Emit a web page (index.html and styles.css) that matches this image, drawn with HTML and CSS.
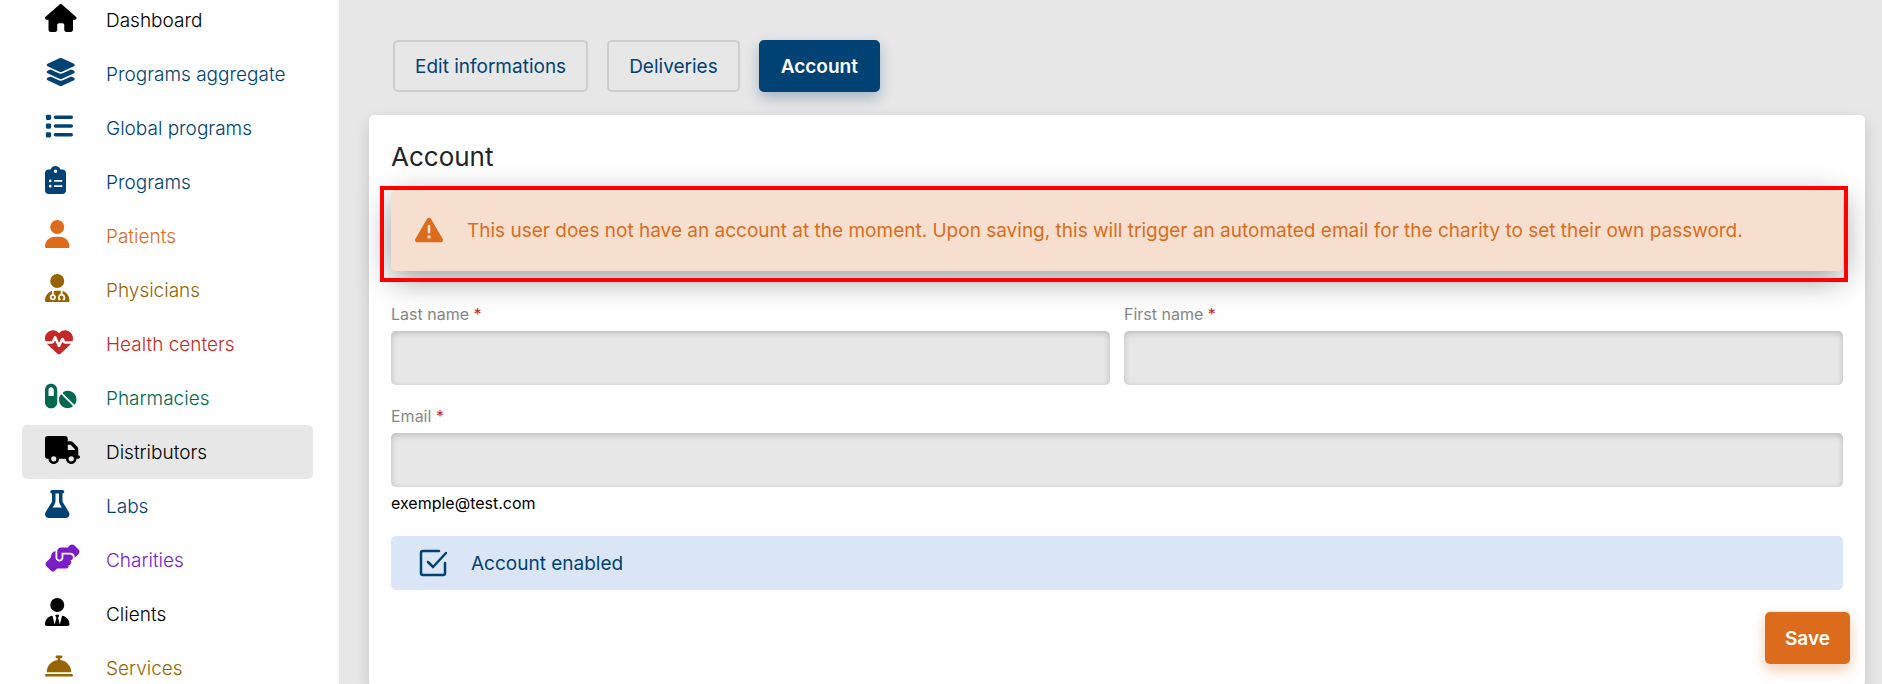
FILE: index.html
```html
<!DOCTYPE html>
<html lang="en">
<head>
  <meta charset="UTF-8">
  <meta name="viewport" content="width=device-width, initial-scale=1.0">
  <title>Distributors - Account</title>
  <link rel="stylesheet" href="styles.css">
</head>
<body>

  <!-- Sidebar -->
  <nav class="sidebar">
    <ul class="menu">
      <li><a href="#" class="menu-link black">
        <span class="menu-icon"><svg viewBox="0 0 576 512"><path d="M575.8 255.5c0 18-15 32.1-32 32.1h-32l.7 160.2c0 2.7-.2 5.4-.5 8.1V472c0 22.1-17.9 40-40 40H456c-1.1 0-2.2 0-3.3-.1c-1.4 .1-2.8 .1-4.2 .1H416 392c-22.1 0-40-17.9-40-40V448 384c0-17.7-14.3-32-32-32H256c-17.7 0-32 14.3-32 32v64 24c0 22.1-17.9 40-40 40H160 128.1c-1.5 0-3-.1-4.5-.2c-1.2 .1-2.4 .2-3.6 .2H104c-22.1 0-40-17.9-40-40V360c0-.9 0-1.9 .1-2.8V287.6H32c-18 0-32-14-32-32.1c0-9 3-17 10-24L266.4 8c7-7 15-8 22-8s15 2 21 7L564.8 231.5c8 7 12 15 11 24z"/></svg></span>
        Dashboard
      </a></li>
      <li><a href="#" class="menu-link blue">
        <span class="menu-icon"><svg viewBox="0 0 576 512"><path d="M264.5 5.2c14.9-6.9 32.1-6.9 47 0l218.6 101c8.5 3.9 13.9 12.4 13.9 21.8s-5.4 17.9-13.9 21.8l-218.6 101c-14.9 6.9-32.1 6.9-47 0L45.9 149.8C37.4 145.8 32 137.3 32 128s5.4-17.9 13.9-21.8L264.5 5.2zM476.9 209.6l53.2 24.6c8.5 3.9 13.9 12.4 13.9 21.8s-5.4 17.9-13.9 21.8l-218.6 101c-14.9 6.9-32.1 6.9-47 0L45.9 277.8C37.4 273.8 32 265.3 32 256s5.4-17.9 13.9-21.8l53.2-24.6 152 70.2c23.4 10.8 50.4 10.8 73.8 0l152-70.2zm-152 198.2l152-70.2 53.2 24.6c8.5 3.9 13.9 12.4 13.9 21.8s-5.4 17.9-13.9 21.8l-218.6 101c-14.9 6.9-32.1 6.9-47 0L45.9 405.8C37.4 401.8 32 393.3 32 384s5.4-17.9 13.9-21.8l53.2-24.6 152 70.2c23.4 10.8 50.4 10.8 73.8 0z"/></svg></span>
        Programs aggregate
      </a></li>
      <li><a href="#" class="menu-link blue">
        <span class="menu-icon"><svg viewBox="0 0 512 512"><path d="M40 48C26.7 48 16 58.7 16 72v48c0 13.3 10.7 24 24 24H88c13.3 0 24-10.7 24-24V72c0-13.3-10.7-24-24-24H40zM192 64c-17.7 0-32 14.3-32 32s14.3 32 32 32H480c17.7 0 32-14.3 32-32s-14.3-32-32-32H192zm0 160c-17.7 0-32 14.3-32 32s14.3 32 32 32H480c17.7 0 32-14.3 32-32s-14.3-32-32-32H192zm0 160c-17.7 0-32 14.3-32 32s14.3 32 32 32H480c17.7 0 32-14.3 32-32s-14.3-32-32-32H192zM16 232v48c0 13.3 10.7 24 24 24H88c13.3 0 24-10.7 24-24V232c0-13.3-10.7-24-24-24H40c-13.3 0-24 10.7-24 24zM40 368c-13.3 0-24 10.7-24 24v48c0 13.3 10.7 24 24 24H88c13.3 0 24-10.7 24-24V392c0-13.3-10.7-24-24-24H40z"/></svg></span>
        Global programs
      </a></li>
      <li><a href="#" class="menu-link blue">
        <span class="menu-icon"><svg viewBox="0 0 384 512"><path d="M192 0c-41.8 0-77.4 26.7-90.5 64H64C28.7 64 0 92.7 0 128V448c0 35.3 28.7 64 64 64H320c35.3 0 64-28.7 64-64V128c0-35.3-28.7-64-64-64H282.5C269.4 26.7 233.8 0 192 0zm0 64a32 32 0 1 1 0 64 32 32 0 1 1 0-64zM72 272a24 24 0 1 1 48 0 24 24 0 1 1 -48 0zm104-16H304c8.8 0 16 7.2 16 16s-7.2 16-16 16H176c-8.8 0-16-7.2-16-16s7.2-16 16-16zM72 368a24 24 0 1 1 48 0 24 24 0 1 1 -48 0zm88 0c0-8.8 7.2-16 16-16H304c8.8 0 16 7.2 16 16s-7.2 16-16 16H176c-8.8 0-16-7.2-16-16z"/></svg></span>
        Programs
      </a></li>
      <li><a href="#" class="menu-link orange">
        <span class="menu-icon"><svg viewBox="0 0 448 512"><path d="M224 256A128 128 0 1 0 224 0a128 128 0 1 0 0 256zm-45.7 48C79.8 304 0 383.8 0 482.3C0 498.7 13.3 512 29.7 512H418.3c16.4 0 29.7-13.3 29.7-29.7C448 383.8 368.2 304 269.7 304H178.3z"/></svg></span>
        Patients
      </a></li>
      <li><a href="#" class="menu-link brown">
        <span class="menu-icon"><svg viewBox="0 0 448 512"><path d="M224 256A128 128 0 1 0 224 0a128 128 0 1 0 0 256zm-96 55.2C54 332.9 0 401.3 0 482.3C0 498.7 13.3 512 29.7 512H418.3c16.4 0 29.7-13.3 29.7-29.7c0-81-54-149.4-128-171.1V362c27.6 7.1 48 32.2 48 62v40c0 8.8-7.2 16-16 16H336c-8.8 0-16-7.2-16-16s7.2-16 16-16V424c0-17.7-14.3-32-32-32s-32 14.3-32 32v24c8.8 0 16 7.2 16 16s-7.2 16-16 16H256c-8.8 0-16-7.2-16-16V424c0-29.8 20.4-54.9 48-62V304.9c-6-.6-12.1-.9-18.3-.9H178.3c-6.2 0-12.3 .3-18.3 .9v65.4c23.1 6.9 40 28.3 40 53.7c0 30.9-25.1 56-56 56s-56-25.1-56-56c0-25.4 16.9-46.8 40-53.7V311.2zM144 448a24 24 0 1 0 0-48 24 24 0 1 0 0 48z"/></svg></span>
        Physicians
      </a></li>
      <li><a href="#" class="menu-link red">
        <span class="menu-icon"><svg viewBox="0 0 512 512"><path d="M228.3 469.1L47.6 300.4c-4.2-3.9-8.2-8.1-11.9-12.4h87c22.6 0 43-13.6 51.7-34.5l10.5-25.2 49.3 109.5c3.8 8.5 12.1 14 21.4 14.1s17.8-5 22-13.3L320 253.7l1.7 3.4c9.5 19 28.9 31 50.1 31H476.3c-3.7 4.3-7.7 8.5-11.9 12.4L283.7 469.1c-7.5 7-17.4 10.9-27.7 10.9s-20.2-3.9-27.7-10.9zM503.7 240h-132c-3 0-5.8-1.7-7.2-4.4l-23.2-46.3c-4.1-8.1-12.4-13.3-21.5-13.3s-17.4 5.1-21.5 13.3l-41.4 82.8L205.9 158.2c-3.9-8.7-12.7-14.3-22.2-14.1s-18.1 5.9-21.8 14.8l-31.8 76.3c-1.2 3-4.2 4.9-7.4 4.9H16c-2.6 0-5 .4-7.3 1.1C3 225.2 0 208.2 0 190.9v-5.8c0-69.9 50.5-129.5 119.4-141C165 36.5 211.4 51.4 244 84l12 12 12-12c32.6-32.6 79-47.5 124.6-39.9C461.5 55.6 512 115.2 512 185.1v5.8c0 16.9-2.8 33.5-8.3 49.1z"/></svg></span>
        Health centers
      </a></li>
      <li><a href="#" class="menu-link green">
        <span class="menu-icon"><svg viewBox="0 0 576 512"><path d="M112 96c-26.5 0-48 21.5-48 48V256h96V144c0-26.5-21.5-48-48-48zM0 144C0 82.1 50.1 32 112 32s112 50.1 112 112V368c0 61.9-50.1 112-112 112S0 429.9 0 368V144zM554.9 399.4c-7.1 12.3-23.7 13.1-33.8 3.1L333.5 214.9c-10-10-9.3-26.7 3.1-33.8C360 167.7 387.1 160 416 160c88.4 0 160 71.6 160 160c0 28.9-7.7 56-21.1 79.4zm-59.5 59.5C472 472.3 444.9 480 416 480c-88.4 0-160-71.6-160-160c0-28.9 7.7-56 21.1-79.4c7.1-12.3 23.7-13.1 33.8-3.1L498.5 425.1c10 10 9.3 26.7-3.1 33.8z"/></svg></span>
        Pharmacies
      </a></li>
      <li><a href="#" class="menu-link black active">
        <span class="menu-icon"><svg viewBox="0 0 640 512"><path d="M48 0C21.5 0 0 21.5 0 48V368c0 26.5 21.5 48 48 48H64c0 53 43 96 96 96s96-43 96-96H384c0 53 43 96 96 96s96-43 96-96h32c17.7 0 32-14.3 32-32s-14.3-32-32-32V288 256 237.3c0-17-6.7-33.3-18.7-45.3L512 114.7c-12-12-28.3-18.7-45.3-18.7H416V48c0-26.5-21.5-48-48-48H48zM416 160h50.7L544 237.3V256H416V160zM112 416a48 48 0 1 1 96 0 48 48 0 1 1 -96 0zm368-48a48 48 0 1 1 0 96 48 48 0 1 1 0-96z"/></svg></span>
        Distributors
      </a></li>
      <li><a href="#" class="menu-link blue">
        <span class="menu-icon"><svg viewBox="0 0 448 512"><path d="M288 0H160 128C110.3 0 96 14.3 96 32s14.3 32 32 32V196.8c0 11.8-3.3 23.5-9.5 33.5L10.3 406.2C3.6 417.2 0 429.7 0 442.6C0 480.9 31.1 512 69.4 512H378.6c38.3 0 69.4-31.1 69.4-69.4c0-12.8-3.6-25.4-10.3-36.4L329.5 230.4c-6.2-10.1-9.5-21.7-9.5-33.5V64c17.7 0 32-14.3 32-32s-14.3-32-32-32H288zM192 196.8V64h64V196.8c0 23.7 6.6 46.9 19 67.1L309.5 320h-171L173 263.9c12.4-20.2 19-43.4 19-67.1z"/></svg></span>
        Labs
      </a></li>
      <li><a href="#" class="menu-link purple">
        <span class="menu-icon"><svg viewBox="0 0 640 512"><path d="M544 248v3.3l69.7-69.7c21.9-21.9 21.9-57.3 0-79.2L535.6 24.4c-21.9-21.9-57.3-21.9-79.2 0L416.3 64.5c-2.7-.3-5.5-.5-8.3-.5H296c-37.1 0-67.6 28-71.6 64H224V248c0 22.1 17.9 40 40 40s40-17.9 40-40V176c0 0 0-.1 0-.1V160l16 0 136 0c0 0 0 0 .1 0H464c44.2 0 80 35.8 80 80v8zM336 192v56c0 39.8-32.2 72-72 72s-72-32.2-72-72V129.4c-35.9 6.2-65.8 32.3-76 68.2L99.5 255.2 26.3 328.4c-21.9 21.9-21.9 57.3 0 79.2l78.1 78.1c21.9 21.9 57.3 21.9 79.2 0l37.7-37.7c.9 0 1.8 .1 2.7 .1H384c26.5 0 48-21.5 48-48c0-5.6-1-11-2.7-16H432c26.5 0 48-21.5 48-48c0-12.8-5-24.4-13.2-33c25.7-5 45.1-27.6 45.2-54.8v-.4c-.1-30.8-25.1-55.8-56-55.8c0 0 0 0 0 0l-120 0z"/></svg></span>
        Charities
      </a></li>
      <li><a href="#" class="menu-link black">
        <span class="menu-icon"><svg viewBox="0 0 448 512"><path d="M96 128a128 128 0 1 0 256 0A128 128 0 1 0 96 128zm94.5 200.2l18.6 31L175.8 483.1l-36-146.9c-2-8.1-9.8-13.4-17.9-11.3C51.9 342.4 0 405.8 0 481.3c0 17 13.8 30.7 30.7 30.7H162.5c0 0 0 0 .1 0H168 280h5.5c0 0 0 0 .1 0H417.3c17 0 30.7-13.8 30.7-30.7c0-75.5-51.9-138.9-121.9-156.4c-8.1-2-15.9 3.3-17.9 11.3l-36 146.9L238.9 359.2l18.6-31c6.4-10.7-1.3-24.2-13.7-24.2H224 204.3c-12.4 0-20.1 13.6-13.7 24.2z"/></svg></span>
        Clients
      </a></li>
      <li><a href="#" class="menu-link brown">
        <span class="menu-icon"><svg viewBox="0 0 512 512"><path d="M216 64c-13.3 0-24 10.7-24 24s10.7 24 24 24h16v33.3C119.6 157.2 32 252.4 32 368H480c0-115.6-87.6-210.8-200-222.7V112h16c13.3 0 24-10.7 24-24s-10.7-24-24-24H256 216zM24 400c-13.3 0-24 10.7-24 24s10.7 24 24 24H488c13.3 0 24-10.7 24-24s-10.7-24-24-24H24z"/></svg></span>
        Services
      </a></li>
    </ul>
  </nav>

  <main class="content">
    <!-- Tabs -->
    <div class="tabs">
      <button type="button" class="tab">Edit informations</button>
      <button type="button" class="tab">Deliveries</button>
      <button type="button" class="tab tab-active">Account</button>
    </div>

    <!-- Account form -->
    <form class="card">
      <h1>Account</h1>

      <div class="alert">
        <svg viewBox="0 0 512 512"><path d="M256 32c14.2 0 27.3 7.5 34.5 19.8l216 368c7.3 12.4 7.3 27.7 .2 40.1S486.3 480 472 480H40c-14.3 0-27.6-7.7-34.7-20.1s-7-27.8 .2-40.1l216-368C228.7 39.5 241.8 32 256 32zm0 128c-13.3 0-24 10.7-24 24V296c0 13.3 10.7 24 24 24s24-10.7 24-24V184c0-13.3-10.7-24-24-24zm32 224a32 32 0 1 0 -64 0 32 32 0 1 0 64 0z"/></svg>
        <p>This user does not have an account at the moment. Upon saving, this will trigger an automated email for the charity to set their own password.</p>
      </div>

      <div class="fields">
        <div class="field">
          <label for="lastName">Last name <span class="required">*</span></label>
          <input type="text" id="lastName" required>
        </div>
        <div class="field">
          <label for="firstName">First name <span class="required">*</span></label>
          <input type="text" id="firstName" required>
        </div>
        <div class="field field-wide">
          <label for="email">Email <span class="required">*</span></label>
          <input type="email" id="email" required>
          <small>exemple@test.com</small>
        </div>
      </div>

      <label class="check">
        <input type="checkbox" checked>
        <svg viewBox="0 0 28 28">
          <path d="M20 2H4Q2 2 2 4V24Q2 26 4 26H24Q26 26 26 24V14"/>
          <path class="tick" d="M9 13L14 18L27 4"/>
        </svg>
        Account enabled
      </label>

      <div class="actions">
        <button type="submit" class="save">Save</button>
      </div>
    </form>
  </main>

</body>
</html>
```
FILE: styles.css
```css
* {
  box-sizing: border-box;
}

body {
  margin: 0;
  height: 100vh;
  display: flex;
  overflow: hidden;
  background: #e7e7e7;
  font-family: Inter, "Liberation Sans", sans-serif;
  font-size: 19px;
  color: #000;
}

h1,
p {
  margin: 0;
}

button,
input {
  font: inherit;
}

/* SIDEBAR */
.sidebar {
  width: 339px;
  flex-shrink: 0;
  overflow: hidden;
  background: #fff;
}

.menu {
  list-style: none;
  margin: -7px 26px 0 22px;
  padding: 0;
}

.menu-link {
  display: flex;
  align-items: center;
  height: 54px;
  padding-left: 23px;
  border-radius: 5px;
  font-weight: 300;
  text-decoration: none;
}

.menu-icon {
  width: 61px;
  padding-bottom: 4px;
}

.menu-icon svg {
  display: block;
  height: 28px;
  fill: currentColor;
}

.active {
  background: #e7e7e7;
}

.black { color: #000; }
.blue { color: #004274; }
.orange { color: #dc6c1c; }
.brown { color: #966400; }
.red { color: #c62828; }
.green { color: #00684f; }
.purple { color: #7a1cc8; }

/* CONTENT */
.content {
  flex: 1;
  padding: 40px 17px 0 30px;
}

/* TABS */
.tabs {
  display: flex;
  gap: 19px;
  padding-left: 24px;
  margin-bottom: 23px;
}

.tab {
  height: 52px;
  padding: 0 20px;
  border: 2px solid #cdcdcd;
  border-radius: 5px;
  background: transparent;
  color: #004274;
  cursor: pointer;
}

.tab-active {
  border-color: #004274;
  background: #004274;
  color: #fff;
  font-weight: 600;
  box-shadow: 0 6px 14px rgba(0, 66, 116, 0.3);
}

/* CARD */
.card {
  padding: 22px;
  border-radius: 5px;
  background: #fff;
  box-shadow: 0 6px 16px rgba(0, 0, 0, 0.15);
}

h1 {
  margin-bottom: 13px;
  font-size: 26px;
  font-weight: 400;
  line-height: 40px;
  color: #212529;
}

.alert {
  position: relative;
  display: flex;
  align-items: center;
  gap: 24px;
  min-height: 81px;
  padding: 0 24px;
  border-radius: 5px;
  background: #f6dfce;
  color: #dc6c1c;
  box-shadow: 0 8px 32px rgba(0, 0, 0, 0.4);
}

/* red frame around the warning */
.alert::after {
  content: "";
  position: absolute;
  inset: -4px -5px -11px -11px;
  border: 4px solid #f00;
}

.alert svg {
  width: 28px;
  flex-shrink: 0;
  padding-bottom: 2px;
  fill: currentColor;
}

/* FIELDS */
.fields {
  display: grid;
  grid-template-columns: 1fr 1fr;
  gap: 19px 14px;
  margin: 31px 0 21px;
}

.field {
  display: flex;
  flex-direction: column;
}

.field-wide {
  grid-column: 1 / -1;
}

.field label {
  font-size: 16px;
  line-height: 24px;
  margin-bottom: 5px;
  color: #868686;
}

.required {
  color: #c62828;
}

.field input {
  height: 54px;
  padding: 0 16px;
  border: none;
  border-radius: 5px;
  background: #e7e7e7;
  box-shadow: inset 0 2px 6px rgba(0, 0, 0, 0.2);
}

.field small {
  margin-top: 4px;
  font-size: 16px;
  line-height: 24px;
}

/* CHECKBOX */
.check {
  position: relative;
  display: flex;
  align-items: center;
  gap: 24px;
  height: 54px;
  padding: 0 28px;
  border-radius: 5px;
  background: #dae5f5;
  color: #004274;
}

.check input {
  position: absolute;
  opacity: 0;
}

.check svg {
  width: 28px;
  fill: none;
  stroke: currentColor;
  stroke-width: 2.5;
  stroke-linecap: round;
}

.check input:not(:checked) + svg .tick {
  display: none;
}

.actions {
  display: flex;
  justify-content: flex-end;
  margin: 22px -7px 0 0;
}

.save {
  height: 52px;
  padding: 0 20px;
  border: none;
  border-radius: 5px;
  background: #dc6c1c;
  color: #fff;
  font-weight: 600;
  cursor: pointer;
  box-shadow: 0 6px 14px rgba(220, 108, 28, 0.35);
}
```
